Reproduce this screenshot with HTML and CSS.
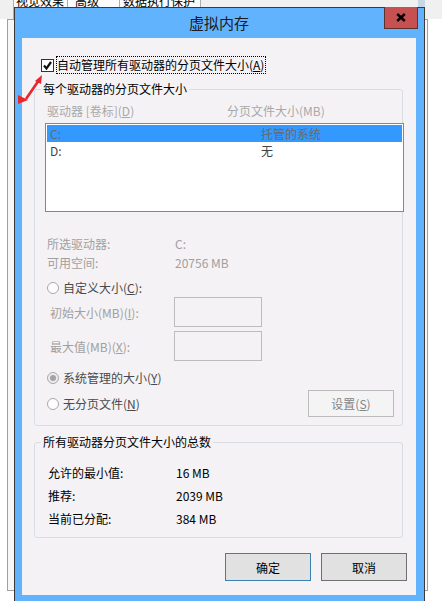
FILE: index.html
```html
<!DOCTYPE html>
<html lang="zh-CN">
<head>
<meta charset="utf-8">
<title>虚拟内存</title>
<link rel="stylesheet" href="styles.css">
</head>
<body>
<div class="screen">
  <div class="tabs">
    <div class="tab tab-1">视觉效果</div>
    <div class="tab tab-2">高级</div>
    <div class="tab tab-3">数据执行保护</div>
    <div class="scroll-patch"></div>
  </div>
  <div class="sheet-body"></div>

  <div class="dialog">
    <div class="titlebar">
      <span class="title">虚拟内存</span>
      <div class="close-btn">
        <svg width="10" height="9" viewBox="0 0 10 9"><path d="M1.2 1 L8.8 8 M8.8 1 L1.2 8" stroke="#000" stroke-width="2.4" fill="none"/></svg>
      </div>
    </div>
    <div class="content">
      <div class="auto-row">
        <span class="checkbox">
          <svg width="11" height="11" viewBox="0 0 11 11"><path d="M2 5.5 L4.5 8.5 L9 2" stroke="#111" stroke-width="2.2" fill="none"/></svg>
        </span>
        <span class="auto-label">自动管理所有驱动器的分页文件大小(<u>A</u>)</span>
      </div>

      <div class="group group-drives">
        <div class="group-title">每个驱动器的分页文件大小</div>
        <div class="cols">
          <span class="col-drive">驱动器 [卷标](<u>D</u>)</span>
          <span>分页文件大小(MB)</span>
        </div>
        <div class="listbox">
          <div class="row selected"><span class="cell-drive">C:</span><span>托管的系统</span></div>
          <div class="row"><span class="cell-drive">D:</span><span>无</span></div>
        </div>
        <div class="info first"><span class="info-label">所选驱动器:</span><span>C:</span></div>
        <div class="info"><span class="info-label">可用空间:</span><span>20756 MB</span></div>
        <div class="radio-row r-custom">
          <span class="radio"></span><span class="radio-label">自定义大小(<u>C</u>):</span>
        </div>
        <div class="size-row">
          <span class="size-label">初始大小(MB)(<u>I</u>):</span><span class="input"></span>
        </div>
        <div class="size-row second">
          <span class="size-label">最大值(MB)(<u>X</u>):</span><span class="input"></span>
        </div>
        <div class="radio-row r-system">
          <span class="radio checked"></span><span class="radio-label">系统管理的大小(<u>Y</u>)</span>
        </div>
        <div class="radio-row r-none">
          <span class="radio"></span><span class="radio-label">无分页文件(<u>N</u>)</span>
          <span class="btn btn-set">设置(<u>S</u>)</span>
        </div>
      </div>

      <div class="group group-total">
        <div class="group-title">所有驱动器分页文件大小的总数</div>
        <div class="totals">
          <div class="total-row"><span class="total-label">允许的最小值:</span><span>16 MB</span></div>
          <div class="total-row"><span class="total-label">推荐:</span><span>2039 MB</span></div>
          <div class="total-row"><span class="total-label">当前已分配:</span><span>384 MB</span></div>
        </div>
      </div>

      <div class="buttons">
        <span class="btn btn-ok">确定</span>
        <span class="btn btn-cancel">取消</span>
      </div>
    </div>
  </div>

  <svg class="annotation" width="442" height="601" viewBox="0 0 442 601">
    <path d="M26 99 L39 80" stroke="#e8262b" stroke-width="2.6" fill="none"/>
    <polygon points="42,75 35,81 41,84" fill="#e8262b"/>
    <polygon points="18,95 28,100 18,104" fill="#e8262b"/>
  </svg>
</div>
</body>
</html>
```

FILE: styles.css
```css
html, body {
  margin: 0;
  padding: 0;
}

body {
  font-family: "Noto Sans CJK SC", "Noto Sans", "Liberation Sans", sans-serif;
  font-size: 12px;
  color: #000;
  background: #fff;
}

.screen {
  position: relative;
  width: 442px;
  height: 601px;
  overflow: hidden;
  background: #fff;
}

/* background property sheet */
.tabs {
  height: 19px;
  display: flex;
  align-items: flex-end;
  padding-left: 13px;
  background: #f0f0f0;
  overflow: hidden;
}

.tab {
  box-sizing: border-box;
  height: 29px;
  border: 1px solid #adadad;
  border-bottom: none;
  background: #fbfbfb;
  line-height: 16px;
  padding-top: 2px;
  color: #000;
  white-space: nowrap;
}

.tab-1 { width: 55px; padding-left: 2px; }
.tab-2 { width: 53px; margin-left: -1px; padding-left: 7px; }
.tab-3 { width: 82px; margin-left: -1px; padding-left: 3px; }

.scroll-patch {
  align-self: stretch;
  width: 7px;
  margin-left: auto;
  margin-right: 17px;
  background: #c9d6e3;
}

.sheet-body {
  box-sizing: border-box;
  margin-left: 7px;
  width: 421px;
  height: 572px;
  border: 1px solid #a0a0a0;
  background: #f7f7f7;
}

/* dialog window */
.dialog {
  position: absolute;
  left: 14px;
  top: 7px;
  box-sizing: border-box;
  width: 411px;
  border: 1px solid #3a3a3a;
  background: #62b3fe;
  padding: 0 8px 7px 7px;
}

.titlebar {
  position: relative;
  height: 30px;
  display: flex;
  align-items: center;
  justify-content: center;
}

.title {
  font-size: 15px;
  line-height: 20px;
  color: #1a1a1a;
}

.close-btn {
  position: absolute;
  right: -2px;
  top: -1px;
  box-sizing: border-box;
  width: 34px;
  height: 22px;
  background: #c75050;
  border: 1px solid #5a3030;
  border-top: none;
  display: flex;
  align-items: center;
  justify-content: center;
}

.content {
  box-sizing: border-box;
  height: 557px;
  background: #f5f2f5;
  padding-top: 18px;
  display: flex;
  flex-direction: column;
}

/* auto-manage checkbox */
.auto-row {
  display: flex;
  align-items: center;
  height: 18px;
  margin-left: 19px;
}

.checkbox {
  box-sizing: border-box;
  width: 13px;
  height: 13px;
  border: 1px solid #333;
  background: #fff;
  display: flex;
  align-items: center;
  justify-content: center;
}

.auto-label {
  box-sizing: border-box;
  height: 18px;
  margin-left: 2px;
  padding-right: 1px;
  border: 1px dotted #000;
  line-height: 16px;
  white-space: nowrap;
}

/* group boxes */
.group {
  box-sizing: border-box;
  width: 369px;
  margin-left: 12px;
  border: 1px solid #d6dde3;
  border-radius: 3px;
  display: flex;
  flex-direction: column;
}

.group-drives {
  margin-top: 15px;
  padding-bottom: 8px;
}

.group-total {
  margin-top: 16px;
  padding-bottom: 7px;
}

.group-title {
  align-self: flex-start;
  margin: -9px 0 0 6px;
  padding: 0 2px;
  line-height: 16px;
  background: #f5f2f5;
  color: #000;
}

.cols {
  display: flex;
  margin-top: 6px;
  padding-left: 12px;
  line-height: 16px;
  color: #a8a8a8;
}

.col-drive {
  width: 180px;
}

.listbox {
  box-sizing: border-box;
  width: 359px;
  height: 89px;
  margin: 4px 0 0 10px;
  border: 1px solid #828790;
  padding: 1px;
  background: #fff;
}

.row {
  display: flex;
  height: 17px;
  line-height: 17px;
  padding-left: 3px;
  color: #444;
}

.row.selected {
  background: #3399ff;
  color: #6a6a6a;
}

.cell-drive {
  width: 211px;
}

.info {
  display: flex;
  height: 19px;
  line-height: 19px;
  padding-left: 12px;
  color: #a0a0a0;
}

.info.first {
  margin-top: 22px;
}

.info-label {
  width: 128px;
}

.radio-row {
  display: flex;
  align-items: center;
  padding-left: 12px;
  color: #4a4a4a;
}

.r-custom { margin-top: 7px; height: 18px; }
.r-system { margin-top: 7px; height: 20px; }
.r-none { margin-top: 2px; height: 27px; padding-right: 8px; }

.radio {
  position: relative;
  box-sizing: border-box;
  width: 12px;
  height: 12px;
  border: 1px solid #a9a9a9;
  border-radius: 50%;
  background: #fdfdfd;
}

.radio.checked {
  background: #ececec;
}

.radio.checked::after {
  content: "";
  position: absolute;
  left: 2px;
  top: 2px;
  width: 6px;
  height: 6px;
  border-radius: 50%;
  background: #a3a3a3;
}

.radio-label {
  margin-left: 4px;
  line-height: 16px;
}

.size-row {
  display: flex;
  align-items: center;
  height: 30px;
  padding-left: 15px;
  color: #a0a0a0;
}

.size-row.second {
  margin-top: 4px;
}

.size-label {
  width: 124px;
}

.input {
  box-sizing: border-box;
  width: 88px;
  height: 30px;
  border: 1px solid #bdbdbd;
  background: #f5f2f5;
}

.btn {
  box-sizing: border-box;
  display: flex;
  align-items: center;
  justify-content: center;
  width: 86px;
  height: 28px;
  border: 1px solid #adadad;
  background: #e1e1e1;
  color: #000;
}

.btn-set {
  margin-left: auto;
  height: 27px;
  background: #f4f4f4;
  border-color: #bcbcbc;
  color: #858585;
}

.totals {
  margin-top: 11px;
}

.total-row {
  display: flex;
  height: 23px;
  line-height: 23px;
  padding-left: 13px;
}

.total-label {
  width: 128px;
}

.buttons {
  display: flex;
  justify-content: flex-end;
  gap: 10px;
  margin-top: 15px;
  padding-right: 9px;
}

.btn-ok {
  border-color: #3c7fb1;
}

.btn-cancel {
  border-color: #707070;
}

.annotation {
  position: absolute;
  left: 0;
  top: 0;
  pointer-events: none;
}
```
